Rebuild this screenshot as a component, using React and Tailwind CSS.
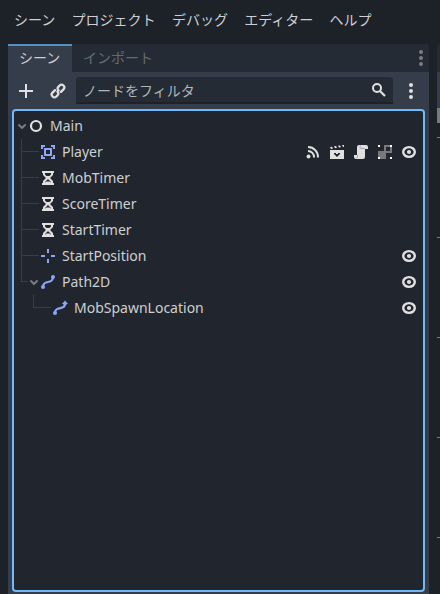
const NODE = '#8da5f3';
const LIGHT = '#e0e0e0';

function Icon({ children, className = '' }) {
  return (
    <svg width="16" height="16" viewBox="0 0 16 16" fill="none" className={`block shrink-0 ${className}`}>
      {children}
    </svg>
  );
}

const Circle = () => <Icon><circle cx="8" cy="8" r="5" stroke={LIGHT} strokeWidth="2.200" /></Icon>;

const Area = () => (
  <Icon>
    <path fill={NODE} d="M1 1v4h2V3h2V1zm10 0v2h2v2h2V1zM4 4v8h8V4zm2 2h4v4H6zM1 11v4h4v-2H3v-2zm12 0v2h-2v2h4v-4z" />
  </Icon>
);

const Timer = () => (
  <Icon>
    <path fill={LIGHT} fillRule="evenodd" d="M2 1v2h1v2l3 3-3 3v2H2v2h12v-2h-1v-2l-3-3 3-3V3h1V1zm3 2h6v1.500L9.500 6h-3L5 4.500zM8 9l3 3v.6L9.500 11.500h-3L5 12.600V12z" />
  </Icon>
);

const Marker = () => (
  <Icon><path fill={NODE} d="M7 1h2v4H7zm0 10h2v4H7zM1 7h4v2H1zm10 0h4v2h-4z" /></Icon>
);

const Path = () => (
  <Icon>
    <path d="M3 13c0-8 10-2 10-10" stroke={NODE} strokeWidth="2.200" />
    <circle cx="3" cy="13" r="2" fill={NODE} />
    <circle cx="13" cy="3" r="2" fill={NODE} />
  </Icon>
);

const PathFollow = () => (
  <Icon>
    <path d="M3 13c0-8 10-2 10-9" stroke={NODE} strokeWidth="2.200" />
    <circle cx="3" cy="13" r="2" fill={NODE} />
    <path fill={NODE} d="M13 .5l3 3.500h-1.500v1h-3V4H10z" />
  </Icon>
);

const Eye = () => (
  <Icon>
    <ellipse cx="8" cy="8" rx="5.800" ry="4.900" stroke={LIGHT} strokeWidth="2.400" />
    <circle cx="8" cy="8" r="2.100" fill={LIGHT} />
  </Icon>
);

const Signals = () => (
  <Icon>
    <path d="M3 3a10 10 0 0 1 10 10.500M3 7a6 6 0 0 1 6 6.500" stroke={LIGHT} strokeWidth="2" />
    <circle cx="3.500" cy="12.500" r="2" fill={LIGHT} />
  </Icon>
);

const Clapper = () => (
  <Icon>
    <path fill={LIGHT} d="M1 3l2-.3 1 1.800-2 .5zm4-.7l2-.3 1 1.800-2 .4zm4-.6l2-.3 1 1.800-2 .4zm4-.6L15 1v1.800l-1 .2z" />
    <path fill={LIGHT} fillRule="evenodd" d="M1 6h14v9H1zm4 3v1l3 3 3-3V9H9v1H7V9z" />
  </Icon>
);

const Script = () => (
  <Icon>
    <path fill={LIGHT} d="M6 1a2 2 0 0 0-2 2v8H1v2a2 2 0 0 0 2 2h7a2 2 0 0 0 2-2V5h3V3a2 2 0 0 0-2-2z" />
    <path d="M8 1.500C6.800 2 7 3 7.500 4.500H12M4.500 11v2c0 1-.5 1-1 1" stroke="#a5a8ad" />
  </Icon>
);

const Group = () => (
  <Icon>
    <path fill="#77797e" fillRule="evenodd" d="M7 1h8v8H9v6H1V7h6zm2 2v4h4V3z" />
    <path fill="#fff" d="M1 1h2v2H1zm12 0h2v2h-2zM1 13h2v2H1zm12 0h2v2h-2z" />
  </Icon>
);

const Link = () => (
  <Icon>
    <g transform="rotate(-45 8 8)" stroke={LIGHT} strokeWidth="2.300" strokeLinecap="round">
      <path d="M6.500 5.300H3a2.700 2.700 0 0 0 0 5.400h1.500a2.700 2.700 0 0 0 2.700-2.700" />
      <path d="M9.500 10.700H13a2.700 2.700 0 0 0 0-5.400h-1.500A2.700 2.700 0 0 0 8.800 8" />
    </g>
  </Icon>
);

const Dots = ({ color }) => (
  <Icon>
    <circle cx="8" cy="2" r="2" fill={color} />
    <circle cx="8" cy="8" r="2" fill={color} />
    <circle cx="8" cy="14" r="2" fill={color} />
  </Icon>
);

const Arrow = () => (
  <svg width="12" height="16" viewBox="0 0 12 16" fill="none" className="block shrink-0">
    <path d="M3 7l3 3 3-3" stroke="#777b82" strokeWidth="2" strokeLinecap="round" strokeLinejoin="round" />
  </svg>
);

const playerTools = [Signals, Clapper, Script, Group, Eye];
const rows = [
  { name: 'Player', icon: Area, tools: playerTools },
  { name: 'MobTimer', icon: Timer },
  { name: 'ScoreTimer', icon: Timer },
  { name: 'StartTimer', icon: Timer },
  { name: 'StartPosition', icon: Marker, tools: [Eye] },
];

function Tools({ items = [] }) {
  return (
    <div className="ml-auto mr-1.5 flex gap-2">
      {items.map((Tool, i) => <Tool key={i} />)}
    </div>
  );
}

function Label({ children }) {
  return <span className="ml-1.5 whitespace-nowrap">{children}</span>;
}

export default function App() {
  return (
    <div className="flex h-[594px] w-[440px] flex-col overflow-hidden bg-[#1d2229] font-['Noto_Sans','Noto_Sans_CJK_JP',sans-serif] text-[14px] leading-5 text-[#cdcfd2]">
      <nav className="flex h-11 shrink-0 gap-[16.300px] whitespace-nowrap pl-3.5 pt-[9px] font-['Noto_Sans_CJK_JP',sans-serif]">
        <span>シーン</span>
        <span>プロジェクト</span>
        <span>デバッグ</span>
        <span>エディター</span>
        <span>ヘルプ</span>
      </nav>
      <div className="flex min-h-0 flex-1 gap-2 pl-2">
        <section className="flex w-[421px] shrink-0 flex-col rounded-t-sm bg-[#363d4a]">
          <div className="flex h-7 shrink-0 rounded-tr-sm bg-[#252b34] font-['Noto_Sans_CJK_JP',sans-serif]">
            <div className="w-16 border-t-2 border-[#5390c4] bg-[#363d4a] pl-[11px] pt-px">シーン</div>
            <div className="pl-[11px] pt-[3px] text-[#666b73]">インポート</div>
            <div className="ml-auto mt-1.5"><Dots color="#797d85" /></div>
          </div>
          <div className="flex h-[37px] shrink-0 items-center pl-2.5 pr-2.5">
            <Icon><path fill={LIGHT} d="M7 1h2v6h6v2H9v6H7V9H1V7h6z" /></Icon>
            <div className="ml-4"><Link /></div>
            <div className="ml-2.5 flex h-[27px] w-[317px] items-center rounded-t-sm border-b-2 border-[#1d2229] bg-[#252b34] pl-[7px] pr-1.5 font-['Noto_Sans_CJK_JP',sans-serif] text-[#b2b5ba]">
              <span>ノードをフィルタ</span>
              <Icon className="ml-auto">
                <circle cx="6" cy="6" r="4" stroke={LIGHT} strokeWidth="2" />
                <path d="M9 9l5 5" stroke={LIGHT} strokeWidth="2.200" />
              </Icon>
            </div>
            <div className="ml-auto"><Dots color={LIGHT} /></div>
          </div>
          <div className="mx-1 h-[483px] shrink-0 rounded-sm border-2 border-[#70bafa] bg-[#21262e] pt-0.5">
            <div className="flex h-[26px] items-center pl-0.5">
              <Arrow />
              <Circle />
              <Label>Main</Label>
            </div>
            {rows.map(({ name, icon: NodeIcon, tools }) => (
              <div key={name} className="flex h-[26px] items-center pl-[7px]">
                <div className="mr-px h-full w-[18px] border-l border-[#393e46] pt-3">
                  <div className="border-t border-[#393e46]" />
                </div>
                <NodeIcon />
                <Label>{name}</Label>
                <Tools items={tools} />
              </div>
            ))}
            <div className="flex h-[26px] items-center pl-[7px]">
              <div className="h-full w-[7px]"><div className="h-[13px] border-b border-l border-[#393e46]" /></div>
              <Arrow />
              <Path />
              <Label>Path2D</Label>
              <Tools items={[Eye]} />
            </div>
            <div className="flex h-[26px] items-center pl-[19px]">
              <div className="mr-px h-full w-[18px]"><div className="h-[13px] border-b border-l border-[#393e46]" /></div>
              <PathFollow />
              <Label>MobSpawnLocation</Label>
              <Tools items={[Eye]} />
            </div>
          </div>
        </section>
        <aside className="flex w-[3px] flex-col">
          <div className="h-7 rounded-tl-sm bg-[#252b34]" />
          <div className="h-9 bg-[#363d4a]" />
          <div className="h-[15px] bg-[#77797f]" />
          <div className="flex flex-col gap-[99px] pt-3.5">
            {[0, 1, 2, 3, 4].map((tick) => <div key={tick} className="h-px shrink-0 bg-[#7b7e83]" />)}
          </div>
        </aside>
      </div>
    </div>
  );
}
